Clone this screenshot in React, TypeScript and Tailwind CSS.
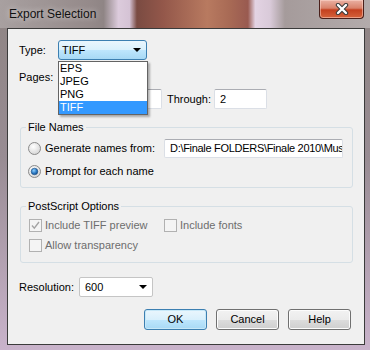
const arrow = (
  <svg width="8" height="4" viewBox="0 0 8 4">
    <path d="M0 0h8L4 4z" fill="#000" />
  </svg>
);

function Radio({ on }: { on?: boolean }) {
  return (
    <svg width="13" height="13" viewBox="0 0 13 13" className="shrink-0">
      <defs>
        <radialGradient id="rb" cx="0.4" cy="0.35" r="0.7">
          <stop offset="0" stopColor="#ffffff" />
          <stop offset="1" stopColor="#d4d4d4" />
        </radialGradient>
        <radialGradient id="rd" cx="0.4" cy="0.35" r="0.7">
          <stop offset="0" stopColor="#8fd0ff" />
          <stop offset="0.6" stopColor="#2a78c2" />
          <stop offset="1" stopColor="#154a86" />
        </radialGradient>
      </defs>
      <circle cx="6.5" cy="6.5" r="6" fill="url(#rb)" stroke="#8a8a8a" />
      {on && <circle cx="6.5" cy="6.5" r="3.3" fill="url(#rd)" stroke="#1b4f84" strokeWidth="0.6" />}
    </svg>
  );
}

function Check({ on }: { on?: boolean }) {
  return (
    <svg width="13" height="13" viewBox="0 0 13 13" className="shrink-0">
      <rect x="0.5" y="0.5" width="12" height="12" fill="#f4f4f4" stroke="#b1b1b1" />
      {on && <path d="M3 6.5l2.3 2.6L10 3" fill="none" stroke="#a3a3a3" strokeWidth="1.4" />}
    </svg>
  );
}

function Field({ w, children }: { w: string; children?: React.ReactNode }) {
  return (
    <div
      className={`${w} h-full flex items-center pl-[5px] bg-white border border-[#dbdfe6] border-t-[#abadb3] rounded-[2px] overflow-hidden whitespace-nowrap`}
    >
      {children}
    </div>
  );
}

function Button({ label, primary }: { label: string; primary?: boolean }) {
  return (
    <button
      className={
        primary
          ? "w-[63px] h-[21px] rounded-[3px] border border-[#3c7fb1] bg-[linear-gradient(180deg,#eaf6fd_0%,#d9f0fc_50%,#bee6fd_51%,#a7d9f5_100%)] shadow-[inset_0_0_0_1px_#c7e8f8]"
          : "w-[63px] h-[21px] rounded-[3px] border border-[#707070] bg-[linear-gradient(180deg,#f2f2f2_0%,#ebebeb_50%,#dddddd_51%,#cfcfcf_100%)] shadow-[inset_0_0_0_1px_#fcfcfc]"
      }
    >
      {label}
    </button>
  );
}

export default function App() {
  return (
    <div className="w-[370px] h-[350px] overflow-hidden flex flex-col font-['Liberation_Sans',Arial,sans-serif] text-[11px] leading-[13px] text-black bg-[linear-gradient(180deg,#8e8483_0%,#988c93_45%,#c9b3cb_100%)]">
      {/* title bar */}
      <div className="h-[28px] shrink-0 flex justify-between pl-[9px] pr-[6px] bg-[linear-gradient(90deg,#a8a0a0_0%,#958a8a_24%,#8f8585_28%,#dccbdc_32%,#d5c3d5_35%,#7a4b42_37%,#93574a_44%,#b87a60_56%,#a86a55_62%,#995a50_67%,#e3d3e3_69%,#d9cad9_73%,#a59b9b_77%,#b3abab_100%)]">
        <span className="self-center mt-[1px] text-[12px] text-[#111] [text-shadow:0_0_6px_rgba(255,255,255,0.7)]">
          Export Selection
        </span>
        <div className="w-[45px] h-[19px] flex items-center justify-center rounded-b-[4px] border border-t-0 border-[#4a1f1a] bg-[linear-gradient(180deg,#eab1a3_0%,#d9826b_45%,#c4401f_55%,#d5623a_100%)] shadow-[inset_0_0_0_1px_rgba(255,220,210,0.5)]">
          <svg width="14" height="12" viewBox="0 0 14 12">
            <path d="M3 2l8 8M11 2l-8 8" stroke="#3a3a3a" strokeWidth="4.4" strokeLinecap="round" />
            <path d="M3 2l8 8M11 2l-8 8" stroke="#fff" strokeWidth="2.4" strokeLinecap="round" />
          </svg>
        </div>
      </div>

      {/* client area */}
      <div className="relative flex-1 ml-[7px] mr-[5px] mb-[5px] border border-[#3b3b3b] bg-[#f0f0f0] flex flex-col">
        <div className="mt-[11px] pl-[11px] h-[20px] flex items-center">
          <span className="w-[39px]">Type:</span>
          <div className="w-[89px] h-full flex items-center justify-between pl-[3px] pr-[5px] rounded-[3px] border border-[#3c7fb1] bg-[linear-gradient(180deg,#eaf6fd_0%,#d9f0fc_50%,#bee6fd_51%,#a7d9f5_100%)]">
            <span>TIFF</span>
            {arrow}
          </div>
        </div>

        <div className="mt-[11px] pl-[11px]">Pages:</div>

        <div className="mt-[5px] h-[20px] pl-[102px] flex items-center">
          <Field w="w-[52px]" />
          <span className="ml-[5px] mr-[3px]">Through:</span>
          <Field w="w-[53px]">2</Field>
        </div>

        <fieldset className="mt-[12px] ml-[12px] w-[333px] border border-[#d5dfe5] rounded-[3px] pb-[9px]">
          <legend className="ml-[5px] px-[2px]">File Names</legend>
          <div className="mt-[5px] h-[19px] pl-[7px] pr-[9px] flex items-center">
            <Radio />
            <span className="ml-[4px]">Generate names from:</span>
            <div className="ml-auto h-full">
              <Field w="w-[179px] tracking-[-0.3px]">D:\Finale FOLDERS\Finale 2010\Mus</Field>
            </div>
          </div>
          <div className="mt-[7px] h-[13px] pl-[7px] flex items-center">
            <Radio on />
            <span className="ml-[4px]">Prompt for each name</span>
          </div>
        </fieldset>

        <fieldset className="mt-[12px] ml-[12px] w-[333px] border border-[#d5dfe5] rounded-[3px] pb-[10px] text-[#6d6d6d]">
          <legend className="ml-[5px] px-[2px] text-black">PostScript Options</legend>
          <div className="mt-[6px] h-[13px] pl-[8px] flex items-center">
            <div className="w-[135px] flex items-center">
              <Check on />
              <span className="ml-[3px]">Include TIFF preview</span>
            </div>
            <Check />
            <span className="ml-[3px]">Include fonts</span>
          </div>
          <div className="mt-[7px] h-[13px] pl-[8px] flex items-center">
            <Check />
            <span className="ml-[3px]">Allow transparency</span>
          </div>
        </fieldset>

        <div className="mt-[14px] pl-[11px] h-[20px] flex items-center">
          <span className="w-[60px]">Resolution:</span>
          <div className="w-[74px] h-full flex items-center justify-between pl-[5px] pr-[5px] rounded-[2px] border border-[#c5c5c5] bg-white">
            <span>600</span>
            {arrow}
          </div>
        </div>

        <div className="mt-[12px] pr-[13px] flex justify-end gap-[9px]">
          <Button label="OK" primary />
          <Button label="Cancel" />
          <Button label="Help" />
        </div>

        {/* open dropdown list */}
        <ul className="absolute left-[50px] top-[32px] w-[90px] border border-[#646464] bg-white p-0 shadow-[2px_2px_2px_rgba(0,0,0,0.3)]">
          {["EPS", "JPEG", "PNG", "TIFF"].map((t) => (
            <li
              key={t}
              className={`h-[13px] pl-[1px] leading-[13px] ${t === "TIFF" ? "bg-[#3399ff] text-white" : ""}`}
            >
              {t}
            </li>
          ))}
        </ul>
      </div>
    </div>
  );
}
